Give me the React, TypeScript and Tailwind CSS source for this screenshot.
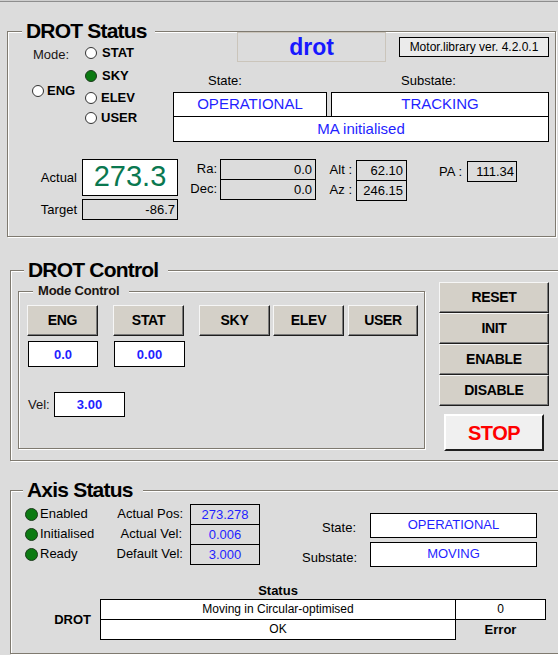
import React from "react";

const frame =
  "border border-[#7f7a70] shadow-[inset_1px_1px_0_#ffffff,1px_1px_0_#ffffff]";
const btn =
  "flex items-center justify-center border border-t-[#f6f6f6] border-l-[#f6f6f6] border-r-[#1e1e1e] border-b-[#1e1e1e] bg-[#d4d0c8] shadow-[inset_-1px_-1px_0_#7a7a7a] text-[14px] font-bold tracking-[-0.3px] text-black";
const blue = "text-[#1f1fff]";

function Radio({ on }: { on?: boolean }) {
  return (
    <span
      className={
        on
          ? "inline-block h-[12px] w-[12px] shrink-0 rounded-full border border-[#1c3a1c] bg-[#0b7a12]"
          : "inline-block h-[12px] w-[12px] shrink-0 rounded-full border border-[#333333] bg-white"
      }
    />
  );
}

function Led() {
  return (
    <span className="inline-block h-[13px] w-[13px] shrink-0 rounded-full border border-[#1c3a1c] bg-[#0b7a12]" />
  );
}

export default function App() {
  return (
    <div className="h-[655px] w-[558px] overflow-hidden bg-[#dcdcdc] font-['Liberation_Sans',Arial,sans-serif] text-black">
      <div className="h-px bg-[#cfcfcf]" />
      <div className="h-px bg-[#8e8e8e]" />

      {/* DROT Status */}
      <div className={`ml-[7px] mt-[29px] h-[206px] w-[549px] ${frame}`}>
        <div className="flex items-start">
          <div className="-mt-[13px] w-[165px]">
            <div className="flex">
              <span className="ml-[14px] h-[24px] bg-[#dcdcdc] pl-[4px] pr-[8px] text-[21px] font-bold leading-[24px] tracking-[-0.8px]">
                DROT Status
              </span>
            </div>
            <div className="flex">
              <div className="w-[76px]">
                <div className="h-[24px] pl-[25px] text-[13px] leading-[24px] text-[#1a1414]">
                  Mode:
                </div>
                <div className="mt-[14px] flex h-[20px] items-center pl-[24px]">
                  <Radio />
                  <span className="ml-[3px] text-[13px] font-bold">ENG</span>
                </div>
              </div>
              <div className="pl-[1px]">
                <div className="flex h-[20px] items-center">
                  <Radio />
                  <span className="ml-[5px] text-[13px] font-bold">STAT</span>
                </div>
                <div className="mt-[3px] flex h-[20px] items-center">
                  <Radio on />
                  <span className="ml-[5px] text-[13px] font-bold">SKY</span>
                </div>
                <div className="mt-[1px] flex h-[21px] items-center">
                  <Radio />
                  <span className="ml-[4px] text-[13px] font-bold">ELEV</span>
                </div>
                <div className="flex h-[20px] items-center">
                  <Radio />
                  <span className="ml-[4px] text-[13px] font-bold">USER</span>
                </div>
              </div>
            </div>
          </div>

          <div className="w-[376px]">
            <div className="flex h-[30px] items-center">
              <div className="ml-[64px] flex h-[30px] w-[149px] items-center justify-center border border-[#cbc5bb] text-[23px] font-bold leading-none text-[#1818ff]">
                drot
              </div>
              <div className="ml-[13px] flex h-[20px] w-[150px] items-center justify-center border border-black bg-[#ebebeb] text-[12px] leading-none">
                Motor.library ver. 4.2.0.1
              </div>
            </div>
            <div className="flex h-[30px] pt-[11px] text-[13px] leading-[16px]">
              <div className="w-[228px] pl-[35px]">State:</div>
              <div>Substate:</div>
            </div>
            <div className="flex">
              <div className={`flex h-[25px] w-[154px] items-center justify-center border border-black bg-white pb-[2px] text-[15px] leading-none ${blue}`}>
                OPERATIONAL
              </div>
              <div className={`ml-[4px] flex h-[25px] w-[218px] items-center justify-center border border-black bg-white pb-[2px] text-[15px] leading-none ${blue}`}>
                TRACKING
              </div>
            </div>
            <div className={`-mt-px flex h-[26px] w-[376px] items-center justify-center border border-black bg-white pb-[1px] text-[15px] leading-none ${blue}`}>
              MA initialised
            </div>
          </div>
        </div>

        <div className="mt-[17px] flex items-start text-[13px]">
          <div className="w-[170px]">
            <div className="flex">
              <div className="w-[69px] text-right leading-[37px]">Actual</div>
              <div className="ml-[5px] flex h-[37px] w-[96px] items-center justify-center border border-black bg-white pb-[2px] text-[29px] leading-none text-[#0a7850]">
                273.3
              </div>
            </div>
            <div className="mt-[3px] flex">
              <div className="w-[69px] text-right leading-[21px]">Target</div>
              <div className="ml-[5px] h-[21px] w-[96px] border border-black pr-[2px] text-right leading-[19px]">
                -86.7
              </div>
            </div>
          </div>

          <div className="flex w-[138px]">
            <div className="w-[39px] text-right">
              <div className="h-[20px] leading-[20px]">Ra:</div>
              <div className="h-[20px] leading-[20px]">Dec:</div>
            </div>
            <div className="ml-[3px] w-[96px]">
              <div className="h-[21px] border border-black pr-[3px] text-right leading-[19px]">0.0</div>
              <div className="-mt-px h-[21px] border border-black pr-[3px] text-right leading-[19px]">0.0</div>
            </div>
          </div>

          <div className="mt-px flex w-[91px]">
            <div className="w-[36px] text-right">
              <div className="h-[20px] leading-[20px]">Alt :</div>
              <div className="h-[20px] leading-[20px]">Az :</div>
            </div>
            <div className="ml-[4px] w-[51px]">
              <div className="h-[21px] border border-black pr-[3px] text-right leading-[19px]">62.10</div>
              <div className="-mt-px h-[21px] border border-black pr-[3px] text-right leading-[19px]">246.15</div>
            </div>
          </div>

          <div className="mt-[2px] flex">
            <div className="w-[55px] text-right leading-[21px]">PA :</div>
            <div className="ml-[5px] h-[21px] w-[50px] border border-black pr-[2px] text-right leading-[19px]">
              111.34
            </div>
          </div>
        </div>
      </div>

      {/* DROT Control */}
      <div className={`ml-[10px] mt-[33px] h-[191px] w-[550px] ${frame}`}>
        <div className="flex items-start">
          <div className="w-[414px]">
            <div className="-mt-[13px] flex">
              <span className="ml-[13px] h-[24px] bg-[#dcdcdc] pl-[4px] pr-[10px] text-[21px] font-bold leading-[24px] tracking-[-0.8px]">
                DROT Control
              </span>
            </div>
            <div className={`ml-[7px] mt-[9px] h-[158px] w-[407px] ${frame}`}>
              <div className="-mt-[9px] flex">
                <span className="ml-[14px] h-[16px] bg-[#dcdcdc] pl-[5px] pr-[10px] text-[13px] font-bold leading-[16px] tracking-[-0.2px] text-[#1a1410]">
                  Mode Control
                </span>
              </div>
              <div className="mt-[6px] flex pl-[8px]">
                <div className={`h-[31px] w-[71px] ${btn}`}>ENG</div>
                <div className={`ml-[15px] h-[31px] w-[71px] ${btn}`}>STAT</div>
                <div className={`ml-[15px] h-[31px] w-[71px] ${btn}`}>SKY</div>
                <div className={`ml-[3px] h-[31px] w-[71px] ${btn}`}>ELEV</div>
                <div className={`ml-[4px] h-[31px] w-[70px] ${btn}`}>USER</div>
              </div>
              <div className="mt-[5px] flex pl-[9px]">
                <div className={`flex h-[26px] w-[70px] items-center justify-center border border-black bg-white text-[13px] font-bold leading-none ${blue}`}>
                  0.0
                </div>
                <div className={`ml-[16px] flex h-[26px] w-[71px] items-center justify-center border border-black bg-white text-[13px] font-bold leading-none ${blue}`}>
                  0.00
                </div>
              </div>
              <div className="mt-[25px] flex items-center pl-[9px]">
                <span className="w-[22px] text-[13px] leading-[25px] text-[#1a1414]">Vel:</span>
                <div className={`ml-[4px] flex h-[25px] w-[71px] items-center justify-center border border-black bg-white text-[13px] font-bold leading-none ${blue}`}>
                  3.00
                </div>
              </div>
            </div>
          </div>

          <div className="ml-[14px] mt-[11px] w-[110px]">
            <div className={`h-[31px] w-[110px] ${btn}`}>RESET</div>
            <div className={`h-[31px] w-[110px] ${btn}`}>INIT</div>
            <div className={`h-[31px] w-[110px] ${btn}`}>ENABLE</div>
            <div className={`h-[31px] w-[110px] ${btn}`}>DISABLE</div>
            <div className="ml-[5px] mt-[8px] flex h-[37px] w-[100px] items-center justify-center border-2 border-t-[#ffffff] border-l-[#ffffff] border-r-[#1e1e1e] border-b-[#1e1e1e] bg-[#f0f0f0] text-[20px] font-bold leading-none tracking-[-0.5px] text-[#ff0000]">
              STOP
            </div>
          </div>
        </div>
      </div>

      {/* Axis Status */}
      <div className={`ml-[10px] mt-[29px] h-[164px] w-[550px] ${frame}`}>
        <div className="-mt-[13px] flex">
          <span className="ml-[12px] h-[24px] bg-[#dcdcdc] pl-[4px] pr-[10px] text-[21px] font-bold leading-[24px] tracking-[-0.8px]">
            Axis Status
          </span>
        </div>

        <div className="mt-[2px] flex items-start text-[13px]">
          <div className="w-[99px] pl-[14px]">
            <div className="flex h-[20px] items-center">
              <Led />
              <span className="ml-[2px]">Enabled</span>
            </div>
            <div className="flex h-[20px] items-center">
              <Led />
              <span className="ml-[2px]">Initialised</span>
            </div>
            <div className="flex h-[20px] items-center">
              <Led />
              <span className="ml-[2px]">Ready</span>
            </div>
          </div>
          <div className="w-[73px] text-right">
            <div className="h-[20px] leading-[20px]">Actual Pos:</div>
            <div className="h-[20px] pr-px leading-[20px]">Actual Vel:</div>
            <div className="h-[20px] leading-[20px]">Default Vel:</div>
          </div>
          <div className={`ml-[7px] w-[70px] text-center ${blue}`}>
            <div className="h-[21px] border border-black leading-[19px]">273.278</div>
            <div className="-mt-px h-[21px] border border-black leading-[19px]">0.006</div>
            <div className="-mt-px h-[21px] border border-black leading-[19px]">3.000</div>
          </div>
          <div className="mt-[9px]">
            <div className="flex h-[25px]">
              <div className="h-[25px] w-[96px] text-right leading-[30px]">State:</div>
              <div className={`ml-[14px] flex h-[25px] w-[167px] items-center justify-center border border-black bg-white pb-[2px] leading-none ${blue}`}>
                OPERATIONAL
              </div>
            </div>
            <div className="mt-[4px] flex h-[25px]">
              <div className="h-[25px] w-[97px] text-right leading-[31px]">Substate:</div>
              <div className={`ml-[13px] flex h-[25px] w-[167px] items-center justify-center border border-black bg-white pb-[2px] leading-none ${blue}`}>
                MOVING
              </div>
            </div>
          </div>
        </div>

        <div className="mt-[16px] flex items-start">
          <div className="w-[89px]">
            <div className="h-[16px]" />
            <div className="flex h-[41px] items-center justify-end pr-[9px] text-[13px] font-bold">
              DROT
            </div>
          </div>
          <div className="w-[356px] text-[12px]">
            <div className="h-[16px] text-center text-[13px] font-bold leading-[16px]">Status</div>
            <div className="h-[21px] border border-black bg-white text-center leading-[19px]">
              Moving in Circular-optimised
            </div>
            <div className="-mt-px h-[21px] border border-black bg-white text-center leading-[19px]">
              OK
            </div>
          </div>
          <div className="-ml-px w-[91px]">
            <div className="h-[16px]" />
            <div className="h-[21px] border border-black bg-white text-center text-[12px] leading-[19px]">0</div>
            <div className="h-[20px] text-center text-[13px] font-bold leading-[20px]">Error</div>
          </div>
        </div>
      </div>
    </div>
  );
}
